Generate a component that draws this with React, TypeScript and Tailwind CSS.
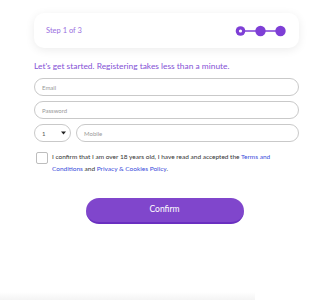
export default function App() {
  return (
    <div className="w-[329px] h-[300px] bg-white overflow-hidden flex flex-col" style={{ fontFamily: 'Lato, "Noto Sans", sans-serif' }}>
      <div className="ml-[34px] w-[265px] flex flex-col">
        <div className="mt-[13px] h-[35px] rounded-[10px] bg-white shadow-[0_2px_10px_rgba(0,0,0,0.08)] flex items-center justify-between pl-[12px] pr-[12px]">
          <span className="text-[7.5px] text-[#9a6ee0]">Step 1 of 3</span>
          <svg width="52" height="12" viewBox="0 0 52 12">
            <line x1="5" y1="6" x2="46" y2="6" stroke="#7e3fd6" strokeWidth="1.6" />
            <circle cx="5.5" cy="6" r="4.8" fill="#7e3fd6" />
            <circle cx="5.5" cy="6" r="1.6" fill="#fff" />
            <circle cx="25.5" cy="6" r="5.2" fill="#7e3fd6" />
            <circle cx="45.5" cy="6" r="5.2" fill="#7e3fd6" />
          </svg>
        </div>
        <div className="mt-[11px] text-[8.4px] leading-[14px] text-[#8552d6]">Let's get started. Registering takes less than a minute.</div>
        <div className="mt-[5px] h-[18px] rounded-full border border-[#c9c9c9] flex items-center pl-[7px] text-[6px] text-[#999]">Email</div>
        <div className="mt-[5px] h-[18px] rounded-full border border-[#c9c9c9] flex items-center pl-[7px] text-[6px] text-[#999]">Password</div>
        <div className="mt-[5px] flex gap-[5px]">
          <div className="w-[37px] h-[18px] rounded-full border border-[#c9c9c9] flex items-center justify-between pl-[7px] pr-[4px] text-[6px] text-[#555]">
            <span>1</span>
            <svg width="5" height="4" viewBox="0 0 5 4"><path d="M0 0.5H5L2.5 3.5Z" fill="#222" /></svg>
          </div>
          <div className="flex-1 h-[18px] rounded-full border border-[#c9c9c9] flex items-center pl-[7px] text-[6px] text-[#999]">Mobile</div>
        </div>
        <div className="mt-[9px] flex pl-[2px] gap-[4px]">
          <div className="w-[12px] h-[12px] shrink-0 rounded-[2px] border border-[#bdbdbd] mt-[1px]" />
          <p className="w-[224px] text-[6.5px] leading-[11.5px] text-[#333]">
            I confirm that I am over 18 years old, I have read and accepted the <span className="text-[#3b4ddb]">Terms and Conditions</span> and <span className="text-[#3b4ddb]">Privacy &amp; Cookies Policy</span>.
          </p>
        </div>
        <div className="mt-[24px] flex justify-center pr-[4px]">
          <button className="w-[158px] h-[26px] rounded-full bg-[#8046cc] border-b-2 border-[#6a2fc0] text-white text-[8.5px] pb-[2px]">Confirm</button>
        </div>
      </div>
      <div className="mt-auto w-[255px] h-[8px] bg-gradient-to-b from-white to-[#f4f4f4]" />
    </div>
  );
}
